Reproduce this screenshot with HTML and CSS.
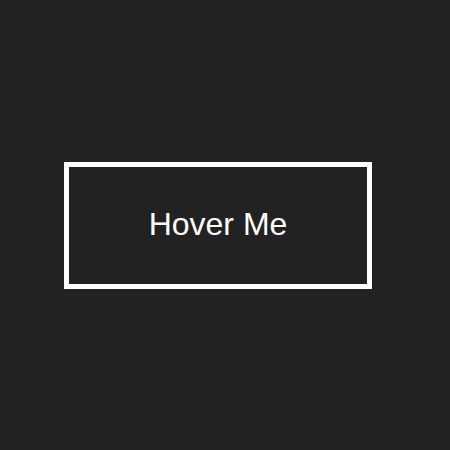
FILE: index.html
```html
<!DOCTYPE html>
<html>
<head>
<meta charset="utf-8">
<link rel="stylesheet" href="styles.css">
</head>
<body>
<button class="hover-btn">Hover Me</button>
</body>
</html>
```
FILE: styles.css
```css
html, body {
  margin: 0;
  height: 100%;
  background: #222222;
}
body {
  display: flex;
  align-items: center;
  justify-content: center;
  padding-right: 14px;
  box-sizing: border-box;
}
.hover-btn {
  box-sizing: border-box;
  width: 308px;
  height: 127px;
  margin-top: 1px;
  border: 5px solid #ffffff;
  background: transparent;
  color: #ffffff;
  font-family: "Liberation Sans", Arial, sans-serif;
  font-size: 32px;
  padding: 0 0 2px 0;
  cursor: pointer;
}
```
